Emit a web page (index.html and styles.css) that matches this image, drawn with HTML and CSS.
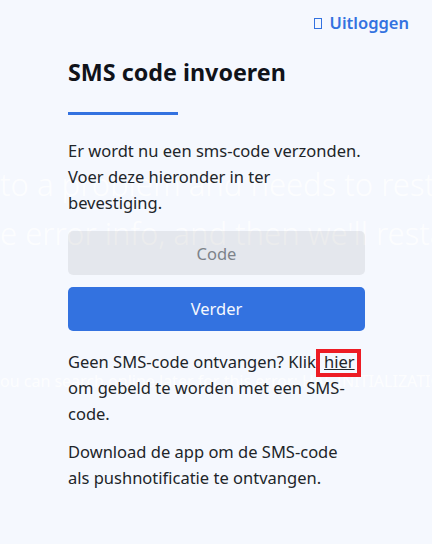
FILE: index.html
```html
<!DOCTYPE html>
<html lang="nl">
<head>
<meta charset="utf-8">
<title>SMS code invoeren</title>
<link rel="stylesheet" href="styles.css">
</head>
<body>
<div class="page">
  <div class="ghost" aria-hidden="true">
    <div class="ghost-line g1">to a problem and needs to restart.</div>
    <div class="ghost-line g2">e error info, and then we'll restart for you.</div>
    <div class="ghost-small">ou can search online later for this error: HAL INITIALIZATION FAILED</div>
  </div>
  <header class="topbar">
    <a class="logout" href="#"><span class="tofu" aria-hidden="true"></span>Uitloggen</a>
  </header>
  <main class="card">
    <h1 class="title">SMS code invoeren</h1>
    <div class="rule"></div>
    <p class="intro">Er wordt nu een sms-code verzonden. Voer deze hieronder in ter bevestiging.</p>
    <input class="code" type="text" placeholder="Code">
    <button class="next" type="button">Verder</button>
    <p class="help">Geen SMS-code ontvangen? Klik <a class="here" href="#">hier</a> om gebeld te worden met een SMS-code.</p>
    <p class="help">Download de app om de SMS-code als pushnotificatie te ontvangen.</p>
  </main>
</div>
</body>
</html>
```

FILE: styles.css
```css
*, *::after { box-sizing: border-box; }
html, body { margin: 0; padding: 0; }
body {
  background: #f5f8fe;
  color: #212529;
  font-family: "Noto Sans", "Open Sans", sans-serif;
  font-size: 16.5px;
  line-height: 26px;
}
.page {
  position: relative;
  width: 432px;
  height: 544px;
  overflow: hidden;
}
.topbar {
  position: relative;
  display: flex;
  justify-content: flex-end;
  padding: 10px 23px 0 0;
}
.logout {
  display: flex;
  align-items: center;
  color: #3372e0;
  font-weight: 600;
  text-decoration: none;
  height: 26px;
}
.tofu {
  width: 8px;
  height: 11px;
  border: 1px solid #3372e0;
  margin-right: 8px;
}
.card {
  position: relative;
  width: 297px;
  margin-left: 68px;
  padding-top: 21px;
}
.title {
  margin: 0;
  font-size: 23.3px;
  line-height: 30px;
  font-weight: 700;
  color: #10131a;
}
.rule {
  width: 110px;
  height: 3px;
  margin-top: 25px;
  background: #3372e0;
}
.intro {
  margin: 23px 0 0;
}
.code {
  display: block;
  width: 100%;
  height: 44px;
  margin-top: 15px;
  border: 0;
  border-radius: 5px;
  background: rgba(0, 0, 0, 0.065);
  color: #212529;
  font: inherit;
  text-align: center;
}
.code::placeholder { color: #7d838a; opacity: 1; }
.next {
  display: block;
  width: 100%;
  height: 44px;
  margin-top: 12px;
  border: 0;
  border-radius: 5px;
  background: #3372e0;
  color: #f5f8fe;
  font: inherit;
}
.help { margin: 18px 3px 0 0; }
.help + .help { margin-top: 12px; }
.here {
  position: relative;
  margin-left: 4px;
  color: #212529;
  text-decoration: underline;
}
.here::after {
  content: "";
  position: absolute;
  left: -8px;
  right: -6px;
  top: -1px;
  height: 28px;
  border: 4px solid #ed1c24;
}
.ghost {
  position: absolute;
  inset: 0;
  pointer-events: none;
  color: rgba(255, 255, 255, 0.8);
  white-space: nowrap;
}
.ghost-line {
  position: absolute;
  left: 0;
  font-size: 31px;
  line-height: 40px;
  font-weight: 300;
}
.g1 { top: 164px; }
.g2 { top: 213px; }
.ghost-small {
  position: absolute;
  left: 0;
  top: 371px;
  font-size: 16px;
  line-height: 20px;
}
```
